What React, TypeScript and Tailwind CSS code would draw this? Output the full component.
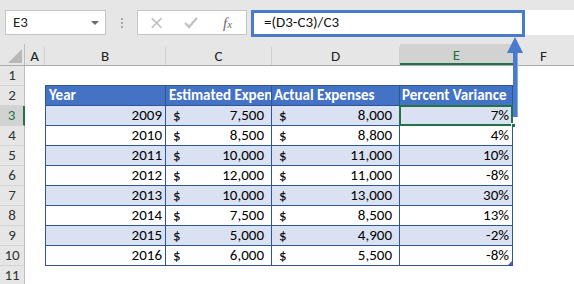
import React from "react";

const rows = [
  ["2009", "7,500", "8,000", "7%"],
  ["2010", "8,500", "8,800", "4%"],
  ["2011", "10,000", "11,000", "10%"],
  ["2012", "12,000", "11,000", "-8%"],
  ["2013", "10,000", "13,000", "30%"],
  ["2014", "7,500", "8,500", "13%"],
  ["2015", "5,000", "4,900", "-2%"],
  ["2016", "6,000", "5,500", "-8%"],
];

const font = { fontFamily: "Carlito, Calibri, Lato, 'Liberation Sans', sans-serif" };

function RowHead({ n, active }: { n: number; active?: boolean }) {
  return (
    <div
      className={
        active
          ? "w-[25px] shrink-0 h-full flex items-center justify-center bg-[#d2d2d2] text-[#217346] border-r-2 border-r-[#217346] border-b border-b-[#d4d4d4]"
          : "w-[25px] shrink-0 h-full flex items-center justify-center bg-[#e6e6e6] text-[#333] border-r border-r-[#bdbdbd] border-b border-b-[#d4d4d4]"
      }
    >
      {n}
    </div>
  );
}

export default function App() {
  return (
    <div className="relative w-[574px] h-[284px] overflow-hidden bg-white text-[15px] text-black" style={font}>
      {/* Formula bar */}
      <div className="h-[44px] bg-[#e6e6e6] flex items-start pt-[10px]">
        <div className="ml-[5px] w-[101px] h-[25px] bg-white border border-[#c6c6c6] flex items-center justify-between pl-[7px] pr-[6px]">
          <span className="text-[#222]">E3</span>
          <span className="w-0 h-0 border-l-[4px] border-r-[4px] border-t-[4px] border-l-transparent border-r-transparent border-t-[#6a6a6a]" />
        </div>
        <div className="w-[31px] h-[25px] flex flex-col items-center justify-center gap-[2px]">
          <span className="w-[2px] h-[2px] bg-[#a8a8a8]" />
          <span className="w-[2px] h-[2px] bg-[#a8a8a8]" />
          <span className="w-[2px] h-[2px] bg-[#a8a8a8]" />
        </div>
        <div className="w-[110px] h-[25px] bg-white border border-[#c6c6c6] flex items-center">
          <svg width="110" height="23" viewBox="0 0 110 23">
            <path d="M14 7 L24 17 M24 7 L14 17" stroke="#c2c2c2" strokeWidth="1.6" fill="none" />
            <path d="M48 12 L52 16 L60 7" stroke="#c2c2c2" strokeWidth="2.4" fill="none" />
          </svg>
          <span className="absolute left-[223px] top-[12px] italic text-[15px] text-[#6a6a6a]" style={{ fontFamily: "'Liberation Serif', serif" }}>
            f<span className="text-[11px]">x</span>
          </span>
        </div>
        <div className="ml-[5px] flex-1 h-[25px] bg-white flex items-center pl-[12px] text-[#111]">
          =(D3-C3)/C3
        </div>
      </div>

      {/* annotation box and arrow */}
      <div className="absolute left-[251px] top-[10px] w-[274px] h-[27px] border-[3px] border-[#4a7acb]" />
      <svg className="absolute left-[503px] top-[36px]" width="24" height="82" viewBox="0 0 24 82">
        <path d="M12 1 L20 17 L14 17 L14 81 L10 81 L10 17 L4 17 Z" fill="#4a7acb" />
        <path d="M14 17 L15 17 L15 81 L14 81 Z" fill="#8aa9dc" />
      </svg>

      {/* Column headers */}
      <div className="h-[22px] flex bg-[#e6e6e6] border-b border-b-[#ababab] text-[#222]">
        <div className="w-[25px] shrink-0 border-r border-r-[#bdbdbd] flex items-end justify-end pr-[2px] pb-[2px]">
          <span className="w-0 h-0 border-l-[14px] border-t-[14px] border-l-transparent border-t-transparent border-b-0 border-r-[0px]" style={{ borderBottom: "14px solid #b8b8b8", borderLeft: "14px solid transparent", borderTop: 0 }} />
        </div>
        <div className="w-[20px] shrink-0 border-r border-r-[#d0d0d0] flex items-center justify-center mt-[3px]">A</div>
        <div className="w-[121px] shrink-0 border-r border-r-[#d0d0d0] flex items-center justify-center mt-[3px]">B</div>
        <div className="w-[106px] shrink-0 border-r border-r-[#d0d0d0] flex items-center justify-center mt-[3px]">C</div>
        <div className="w-[128px] shrink-0 border-r border-r-[#d0d0d0] flex items-center justify-center mt-[3px]">D</div>
        <div className="w-[113px] shrink-0 bg-[#d2d2d2] border-b-2 border-b-[#217346] text-[#217346] flex items-center justify-center pt-[3px]">E</div>
        <div className="flex-1 flex items-center justify-center mt-[3px]">F</div>
      </div>

      {/* Row 1 */}
      <div className="h-[20px] flex">
        <RowHead n={1} />
        <div className="flex-1 border-b border-b-[#2f5597] ml-[20px] mr-[61px]" />
      </div>

      {/* Row 2: table header */}
      <div className="h-[20px] flex">
        <RowHead n={2} />
        <div className="w-[20px] shrink-0" />
        <div className="flex font-bold text-white bg-[#4472c4] border-l border-[#2f5597] border-b">
          <div className="w-[120px] px-[3px] border-r border-[#2f5597] flex items-center whitespace-nowrap overflow-hidden">Year</div>
          <div className="w-[106px] px-[3px] border-r border-[#2f5597] flex items-center whitespace-nowrap overflow-hidden">Estimated Expenses</div>
          <div className="w-[128px] px-[2px] border-r border-[#2f5597] flex items-center whitespace-nowrap overflow-hidden">Actual Expenses</div>
          <div className="w-[113px] px-[2px] border-r border-[#2f5597] flex items-center whitespace-nowrap overflow-hidden">Percent Variance</div>
        </div>
      </div>

      {rows.map((r, i) => {
        const n = i + 3;
        const band = i % 2 === 0 ? "bg-[#d9e1f2]" : "bg-white";
        const last = i === rows.length - 1;
        return (
          <div key={n} className="h-[20px] flex">
            <RowHead n={n} active={n === 3} />
            <div className="w-[20px] shrink-0" />
            <div className={`flex border-l border-b border-[#2f5597] ${band}`}>
              <div className="w-[120px] pr-[3px] border-r border-[#2f5597] flex items-center justify-end">{r[0]}</div>
              <div className="w-[106px] pl-[7px] pr-[7px] border-r border-[#2f5597] flex items-center justify-between">
                <span>$</span>
                <span>{r[1]}</span>
              </div>
              <div className="w-[128px] pl-[7px] pr-[7px] border-r border-[#2f5597] flex items-center justify-between">
                <span>$</span>
                <span>{r[2]}</span>
              </div>
              <div className="relative w-[113px] pr-[3px] border-r border-[#2f5597] flex items-center justify-end">
                {r[3]}
                {n === 3 && (
                  <>
                    <div className="absolute -left-[1px] -top-[1px] w-[114px] h-[21px] border-2 border-[#217346]" />
                    <div className="absolute -right-[4px] -bottom-[3px] w-[5px] h-[5px] bg-[#217346] border border-white" />
                  </>
                )}
                {last && (
                  <span
                    className="absolute right-0 bottom-0 w-0 h-0"
                    style={{ borderBottom: "4px solid #4a5fb0", borderLeft: "4px solid transparent" }}
                  />
                )}
              </div>
            </div>
          </div>
        );
      })}

      <div className="h-[20px] flex">
        <RowHead n={11} />
      </div>
    </div>
  );
}
